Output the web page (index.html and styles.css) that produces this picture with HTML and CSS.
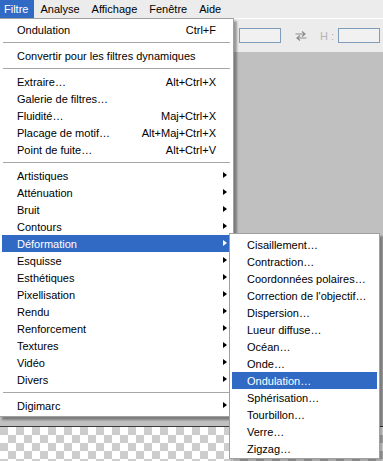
FILE: index.html
```html
<!DOCTYPE html>
<html lang="fr">
<head>
  <meta charset="UTF-8"/>
  <title>Filtre</title>
  <link rel="stylesheet" href="styles.css">
</head>
<body>
<div class="app">

  <!-- menu bar -->
  <div class="menubar">
    <span class="mb-item active">Filtre</span>
    <span class="mb-item">Analyse</span>
    <span class="mb-item">Affichage</span>
    <span class="mb-item">Fenêtre</span>
    <span class="mb-item">Aide</span>
  </div>

  <!-- options bar -->
  <div class="toolbar">
    <span class="tb-field"></span>
    <svg class="tb-swap" width="12" height="10" viewBox="0 0 12 10">
      <path d="M0.5 3h9M7 0.5l3 2.5-3 2.5" fill="none" stroke="#8c8c8c" stroke-width="1.2"/>
      <path d="M11.5 7h-9M5 4.5l-3 2.5 3 2.5" fill="none" stroke="#8c8c8c" stroke-width="1.2"/>
    </svg>
    <span class="tb-label">H :</span>
    <span class="tb-field"></span>
  </div>

  <!-- work area -->
  <div class="workspace">
    <div class="canvas"></div>
  </div>

  <!-- Filtre menu -->
  <div class="menu main-menu">
    <div class="item"><span>Ondulation</span><span class="key">Ctrl+F</span></div>
    <div class="sep"></div>
    <div class="item"><span>Convertir pour les filtres dynamiques</span></div>
    <div class="sep"></div>
    <div class="item"><span>Extraire…</span><span class="key">Alt+Ctrl+X</span></div>
    <div class="item"><span>Galerie de filtres…</span></div>
    <div class="item"><span>Fluidité…</span><span class="key">Maj+Ctrl+X</span></div>
    <div class="item"><span>Placage de motif…</span><span class="key">Alt+Maj+Ctrl+X</span></div>
    <div class="item"><span>Point de fuite…</span><span class="key">Alt+Ctrl+V</span></div>
    <div class="sep"></div>
    <div class="item sub"><span>Artistiques</span></div>
    <div class="item sub"><span>Atténuation</span></div>
    <div class="item sub"><span>Bruit</span></div>
    <div class="item sub"><span>Contours</span></div>
    <div class="item sub active"><span>Déformation</span></div>
    <div class="item sub"><span>Esquisse</span></div>
    <div class="item sub"><span>Esthétiques</span></div>
    <div class="item sub"><span>Pixellisation</span></div>
    <div class="item sub"><span>Rendu</span></div>
    <div class="item sub"><span>Renforcement</span></div>
    <div class="item sub"><span>Textures</span></div>
    <div class="item sub"><span>Vidéo</span></div>
    <div class="item sub"><span>Divers</span></div>
    <div class="sep"></div>
    <div class="item sub"><span>Digimarc</span></div>
  </div>

  <!-- Déformation submenu -->
  <div class="menu sub-menu">
    <div class="item"><span>Cisaillement…</span></div>
    <div class="item"><span>Contraction…</span></div>
    <div class="item"><span>Coordonnées polaires…</span></div>
    <div class="item"><span>Correction de l'objectif…</span></div>
    <div class="item"><span>Dispersion…</span></div>
    <div class="item"><span>Lueur diffuse…</span></div>
    <div class="item"><span>Océan…</span></div>
    <div class="item"><span>Onde…</span></div>
    <div class="item active"><span>Ondulation…</span></div>
    <div class="item"><span>Sphérisation…</span></div>
    <div class="item"><span>Tourbillon…</span></div>
    <div class="item"><span>Verre…</span></div>
    <div class="item"><span>Zigzag…</span></div>
  </div>

</div>
</body>
</html>
```

FILE: styles.css
```css
* {
  margin: 0; padding: 0;
  box-sizing: border-box;
}

body {
  font-family: "Liberation Sans", Arial, sans-serif;
  font-size: 11px;
  color: #000;
  background: #c0c0c0;
  overflow: hidden;
}

.app {
  position: relative;
  width: 383px;
  height: 461px;
  display: flex;
  flex-direction: column;
  overflow: hidden;
}

/* menu bar */
.menubar {
  height: 18px;
  display: flex;
  background: #ececec;
  line-height: 18px;
}

.mb-item {
  padding: 0 6px;
}

.mb-item:first-child { padding-left: 4px; }

.mb-item.active {
  background: #316ac5;
  color: #fff;
}

/* options bar */
.toolbar {
  height: 34px;
  display: flex;
  align-items: center;
  padding-left: 239px;
  background: #ececec;
  border-top: 1px solid #fff;
}

.tb-field {
  width: 42px;
  height: 15px;
  border: 1px solid #7f9db9;
  background: #f1f1f1;
}

.tb-swap {
  margin: 0 13px 0 14px;
}

.tb-label {
  color: #b4b4b4;
  margin-right: 4px;
  white-space: nowrap;
}

/* work area */
.workspace {
  flex: 1;
  background: #c0c0c0;
  padding-top: 374px;
}

.canvas {
  height: 100%;
  border-top: 1px solid #3a3a3a;
  background: conic-gradient(#fff 25%, #cdcdcd 0 50%, #fff 0 75%, #cdcdcd 0) 0 0 / 16px 16px;
}

/* drop-down menus */
.menu {
  position: absolute;
  background: #fff;
  border: 1px solid #a0a0a0;
  padding: 2px;
  box-shadow: 3px 3px 2px rgba(0, 0, 0, 0.35);
}

.main-menu {
  left: -1px;
  top: 18px;
  width: 235px;
}

.sub-menu {
  left: 229px;
  top: 233px;
  width: 151px;
  padding-bottom: 1px;
}

.item {
  position: relative;
  height: 17px;
  line-height: 18px;
  padding: 0 15px;
  display: flex;
  justify-content: space-between;
  white-space: nowrap;
}

.item.active {
  background: #316ac5;
  color: #fff;
}

.item.sub::after {
  content: "";
  position: absolute;
  right: 4px;
  top: 5px;
  border-left: 4px solid #000;
  border-top: 3.5px solid transparent;
  border-bottom: 3.5px solid transparent;
}

.item.sub.active::after {
  border-left-color: #fff;
}

.sep {
  height: 9px;
  padding-top: 4px;
  margin: 0 1px;
}

.sep::before {
  content: "";
  display: block;
  height: 1px;
  background: #a7a7a7;
}
```
